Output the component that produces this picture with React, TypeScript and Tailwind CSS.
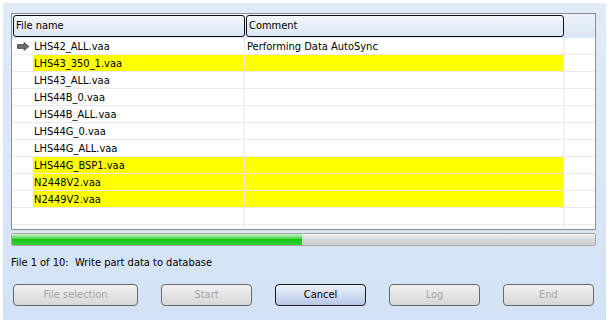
import React from "react";

const rows: { name: string; comment: string; yellow: boolean; current?: boolean }[] = [
  { name: "LHS42_ALL.vaa", comment: "Performing Data AutoSync", yellow: false, current: true },
  { name: "LHS43_350_1.vaa", comment: "", yellow: true },
  { name: "LHS43_ALL.vaa", comment: "", yellow: false },
  { name: "LHS44B_0.vaa", comment: "", yellow: false },
  { name: "LHS44B_ALL.vaa", comment: "", yellow: false },
  { name: "LHS44G_0.vaa", comment: "", yellow: false },
  { name: "LHS44G_ALL.vaa", comment: "", yellow: false },
  { name: "LHS44G_BSP1.vaa", comment: "", yellow: true },
  { name: "N2448V2.vaa", comment: "", yellow: true },
  { name: "N2449V2.vaa", comment: "", yellow: true },
  { name: "", comment: "", yellow: false },
];

function Arrow() {
  return (
    <svg width="13" height="9" viewBox="0 0 13 9">
      <path d="M0.5 2.5 H7 V0.5 L12 4.5 L7 8.5 V6.5 H0.5 Z" fill="#6b6b6b" stroke="#4a4a4a" strokeWidth="0.8" />
    </svg>
  );
}

function Btn({ label, active }: { label: string; active?: boolean }) {
  return (
    <div
      className={
        active
          ? "w-[91px] h-[22px] rounded-[4px] border border-[#1b1b1b] bg-gradient-to-b from-[#eef2fa] to-[#b6c7e6] flex items-center justify-center text-[#000]"
          : "h-[22px] rounded-[4px] border border-[#6a6a6a] bg-gradient-to-b from-[#f1f1f1] to-[#d7d7d7] flex items-center justify-center text-[#a3a3a3]"
      }
    >
      {label}
    </div>
  );
}

export default function App() {
  return (
    <div className="w-[611px] h-[324px] bg-white pt-[3px] pl-[3px]" style={{ fontFamily: "'DejaVu Sans Condensed', 'Liberation Sans', sans-serif" }}>
      <div className="w-[603px] h-[317px] bg-gradient-to-b from-[#e1ebf8] to-[#d3e2f6] pt-[10px] pl-[8px] text-[11px] text-black">
        {/* table */}
        <div className="w-[585px] h-[217px] border border-[#8c8d8e] bg-white flex flex-col overflow-hidden">
          <div className="h-[24px] flex bg-gradient-to-b from-[#eef3fb] to-[#d9e5f5] pt-[1px] pl-[1px] shrink-0">
            <div className="w-[232px] h-[22px] border border-[#111] rounded-[3px] flex items-center pl-[2px] pt-[1px] bg-gradient-to-b from-[#f3f7fc] to-[#dbe6f5]">File name</div>
            <div className="w-[318px] h-[22px] ml-[1px] border border-[#111] rounded-[3px] flex items-center pl-[2px] pt-[1px] bg-gradient-to-b from-[#f3f7fc] to-[#dbe6f5]">Comment</div>
          </div>
          {rows.map((r, i) => (
            <div key={i} className="h-[17px] flex shrink-0">
              <div className="w-[233px] flex border-b border-r border-[#ebebeb]">
                <div className="w-[21px] flex items-center justify-center pl-[2px] pt-[1px] bg-white">{r.current ? <Arrow /> : null}</div>
                <div className={"flex-1 flex items-center pl-[1px] pt-[2px] " + (r.yellow ? "bg-[#ffff00]" : "bg-white")}>{r.name}</div>
              </div>
              <div className={"w-[319px] flex items-center pl-[2px] pt-[2px] border-b border-r border-[#ebebeb] " + (r.yellow ? "bg-[#ffff00]" : "bg-white")}>{r.comment}</div>
              <div className="flex-1 border-b border-[#ebebeb]"></div>
            </div>
          ))}
          <div className="flex flex-1">
            <div className="w-[233px] border-r border-[#ebebeb]"></div>
            <div className="w-[319px] border-r border-[#ebebeb]"></div>
          </div>
        </div>
        {/* progress */}
        <div className="mt-[3px] w-[585px] h-[13px] rounded-[2px] border border-[#a9a9a9] bg-gradient-to-b from-[#f0f0f0] via-[#d9d9d9] to-[#cfcfcf] overflow-hidden">
          <div className="h-full w-[290px] bg-gradient-to-b from-[#c8f5c8] via-[#14c814] to-[#2fd02f]"></div>
        </div>
        <div className="mt-[11px] h-[13px] flex items-center">File 1 of 10:&nbsp; Write part data to database</div>
        <div className="mt-[14px] flex pl-[2px]">
          <div className="w-[125px]"><Btn label="File selection" /></div>
          <div className="w-[91px] ml-[23px]"><Btn label="Start" /></div>
          <div className="ml-[23px]"><Btn label="Cancel" active /></div>
          <div className="w-[91px] ml-[23px]"><Btn label="Log" /></div>
          <div className="w-[91px] ml-[23px]"><Btn label="End" /></div>
        </div>
      </div>
    </div>
  );
}
